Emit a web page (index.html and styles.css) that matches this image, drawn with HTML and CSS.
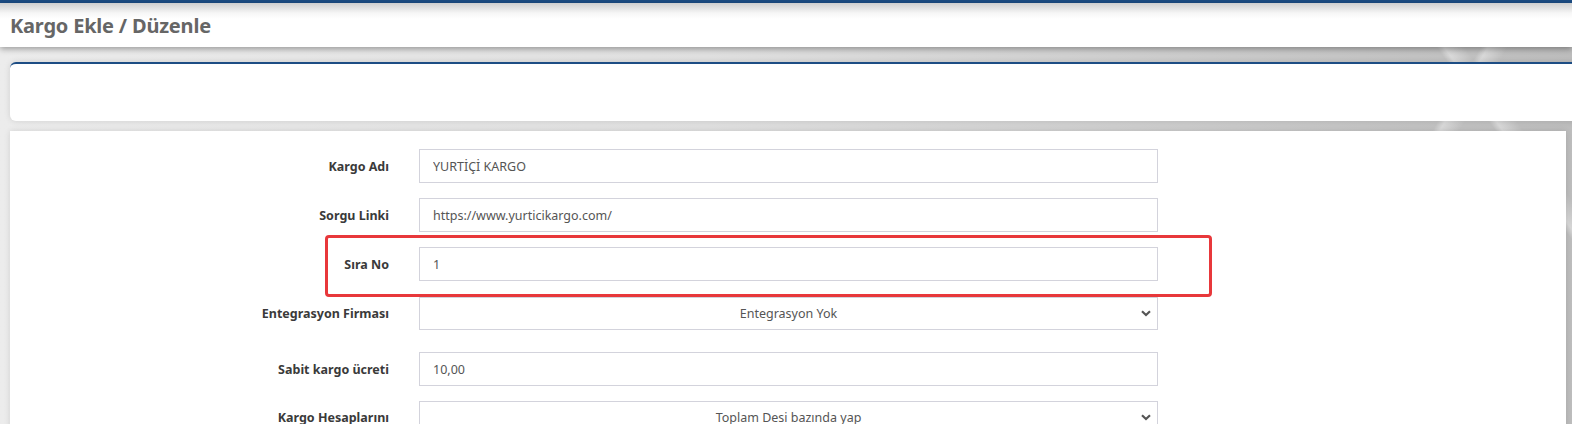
FILE: index.html
```html
<!DOCTYPE html>
<html lang="tr">
<head>
  <meta charset="UTF-8" />
  <title>Kargo Ekle / Düzenle</title>
  <link rel="stylesheet" href="styles.css">
</head>
<body>

  <div class="topbar"></div>
  <header class="page-head">
    <h1>Kargo Ekle / Düzenle</h1>
  </header>

  <main class="content">
    <section class="card card-top"></section>

    <section class="card card-form">
      <form class="cargo-form" autocomplete="off">
        <div class="form-row">
          <label for="name">Kargo Adı</label>
          <input type="text" id="name" value="YURTİÇİ KARGO" />
        </div>

        <div class="form-row">
          <label for="link">Sorgu Linki</label>
          <input type="text" id="link" value="https://www.yurticikargo.com/" />
        </div>

        <div class="form-row row-order">
          <label for="order">Sıra No</label>
          <input type="text" id="order" value="1" />
          <span class="highlight"></span>
        </div>

        <div class="form-row row-select">
          <label for="integration">Entegrasyon Firması</label>
          <div class="select-wrap">
            <select id="integration">
              <option>Entegrasyon Yok</option>
            </select>
            <svg class="chevron" width="10" height="7" viewBox="0 0 10 7"><path d="M1 1.2l4 3.8 4-3.8" fill="none" stroke="#555" stroke-width="2.2"/></svg>
          </div>
        </div>

        <div class="form-row">
          <label for="fee">Sabit kargo ücreti</label>
          <input type="text" id="fee" value="10,00" />
        </div>

        <div class="form-row">
          <label for="calc">Kargo Hesaplarını</label>
          <div class="select-wrap">
            <select id="calc">
              <option>Toplam Desi bazında yap</option>
            </select>
            <svg class="chevron" width="10" height="7" viewBox="0 0 10 7"><path d="M1 1.2l4 3.8 4-3.8" fill="none" stroke="#555" stroke-width="2.2"/></svg>
          </div>
        </div>
      </form>
    </section>
  </main>

</body>
</html>
```

FILE: styles.css
```css
* {
  box-sizing: border-box;
}

body {
  margin: 0;
  padding: 0;
  font-family: 'Noto Sans', 'Open Sans', sans-serif;
  color: #333;
  overflow: hidden;
  height: 424px;
  background-color: #d9d9d9;
  background-image:
    linear-gradient(120deg, transparent 0 83%, rgba(255,255,255,0.4) 83.4%, transparent 84.5% 100%),
    linear-gradient(55deg, transparent 0 91%, rgba(255,255,255,0.4) 91.4%, transparent 92.5% 100%),
    linear-gradient(to right, #ececec 0%, #e0e0e0 45%, #c9c9c9 80%, #bdbdbd 100%);
}

.topbar {
  height: 3px;
  background: #1d4d84;
}

.page-head {
  height: 44px;
  background: linear-gradient(#cfcfcf 0, #f6f6f6 10px, #fff 16px);
  box-shadow: 0 2px 6px rgba(0,0,0,0.35);
  padding: 0 10px;
  display: flex;
  align-items: center;
  position: relative;
}

.page-head h1 {
  margin: 0;
  font-size: 20px;
  font-weight: 700;
  color: #666;
  letter-spacing: -0.2px;
}

.content {
  padding: 15px 6px 0 10px;
}

.card {
  background: #fff;
  box-shadow: 0 0 6px rgba(0,0,0,0.12);
}

.card-top {
  height: 59px;
  border-top: 2px solid #1d4d84;
  border-radius: 6px 0 0 6px;
  margin-right: -20px;
}

.card-form {
  margin-top: 10px;
  padding-top: 18px;
  height: 300px;
}

.form-row {
  display: flex;
  align-items: center;
  margin-bottom: 15px;
  position: relative;
}

.row-order {
  margin-bottom: 16px;
}

.row-select {
  margin-bottom: 22px;
}

.form-row label {
  width: 379px;
  text-align: right;
  font-size: 12.5px;
  font-weight: 700;
  color: #3a3a3a;
  margin-right: 30px;
}

.form-row input,
.form-row select {
  width: 739px;
  height: 34px;
  border: 1px solid #d3d3dc;
  border-radius: 0;
  padding: 0 13px;
  font-family: 'Noto Sans', 'Open Sans', sans-serif;
  font-size: 12.5px;
  color: #555;
  background: #fff;
  outline: none;
}

.form-row select {
  height: 33px;
  appearance: none;
  -webkit-appearance: none;
  text-align: center;
  text-align-last: center;
}

.select-wrap {
  position: relative;
}

.chevron {
  position: absolute;
  right: 7px;
  top: 13px;
}

.highlight {
  position: absolute;
  left: 315px;
  top: -12px;
  width: 887px;
  height: 62px;
  border: 3px solid #e8383b;
  border-radius: 4px;
  pointer-events: none;
}
```
